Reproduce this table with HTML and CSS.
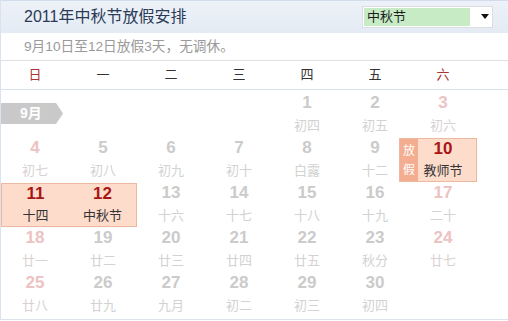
FILE: index.html
```html
<!DOCTYPE html>
<html lang="zh-CN">
<head>
<meta charset="utf-8">
<title>2011年中秋节放假安排</title>
<link rel="stylesheet" href="styles.css">
</head>
<body>
<div class="cal">
  <div class="hd">
    <h1 class="title">2011年中秋节放假安排</h1>
    <div class="sel">
      <span class="sel-val">中秋节</span>
      <span class="sel-arrow"></span>
    </div>
  </div>
  <div class="sub">9月10日至12日放假3天，无调休。</div>
  <div class="week">
    <span class="we">日</span><span>一</span><span>二</span><span>三</span><span>四</span><span>五</span><span class="we">六</span>
  </div>
  <div class="days">
    <div class="cell"><span class="month">9月</span></div>
    <div class="cell"></div>
    <div class="cell"></div>
    <div class="cell"></div>
    <div class="cell"><b>1</b><i>初四</i></div>
    <div class="cell"><b>2</b><i>初五</i></div>
    <div class="cell wk"><b>3</b><i>初六</i></div>

    <div class="cell wk"><b>4</b><i>初七</i></div>
    <div class="cell"><b>5</b><i>初八</i></div>
    <div class="cell"><b>6</b><i>初九</i></div>
    <div class="cell"><b>7</b><i>初十</i></div>
    <div class="cell"><b>8</b><i>白露</i></div>
    <div class="cell"><b>9</b><i>十二</i></div>
    <div class="cell hol hol-s hol-e"><span class="badge">放<br>假</span><b>10</b><i>教师节</i></div>

    <div class="cell hol hol-s"><b>11</b><i>十四</i></div>
    <div class="cell hol hol-e"><b>12</b><i>中秋节</i></div>
    <div class="cell"><b>13</b><i>十六</i></div>
    <div class="cell"><b>14</b><i>十七</i></div>
    <div class="cell"><b>15</b><i>十八</i></div>
    <div class="cell"><b>16</b><i>十九</i></div>
    <div class="cell wk"><b>17</b><i>二十</i></div>

    <div class="cell wk"><b>18</b><i>廿一</i></div>
    <div class="cell"><b>19</b><i>廿二</i></div>
    <div class="cell"><b>20</b><i>廿三</i></div>
    <div class="cell"><b>21</b><i>廿四</i></div>
    <div class="cell"><b>22</b><i>廿五</i></div>
    <div class="cell"><b>23</b><i>秋分</i></div>
    <div class="cell wk"><b>24</b><i>廿七</i></div>

    <div class="cell wk"><b>25</b><i>廿八</i></div>
    <div class="cell"><b>26</b><i>廿九</i></div>
    <div class="cell"><b>27</b><i>九月</i></div>
    <div class="cell"><b>28</b><i>初二</i></div>
    <div class="cell"><b>29</b><i>初三</i></div>
    <div class="cell"><b>30</b><i>初四</i></div>
    <div class="cell"></div>
  </div>
</div>
</body>
</html>
```

FILE: styles.css
```css
html, body {
  margin: 0;
  padding: 0;
  background: #fff;
}

body {
  font-family: "Liberation Sans", "Noto Sans CJK SC", sans-serif;
  width: 508px;
  height: 321px;
  overflow: hidden;
}

.cal {
  width: 508px;
  box-sizing: border-box;
  border-left: 1px solid #d9e2ee;
}

.hd {
  height: 33px;
  box-sizing: border-box;
  border-top: 1px solid #d3dcea;
  background: linear-gradient(#edf2f8, #e4ebf4);
  display: flex;
  align-items: center;
  padding-left: 23px;
}

.title {
  margin: 0;
  font-size: 16px;
  font-weight: normal;
  line-height: 20px;
  color: #2b3b57;
  flex: 1;
}

.sel {
  width: 131px;
  height: 22px;
  box-sizing: border-box;
  margin-right: 15px;
  margin-top: -1px;
  background: #fff;
  border: 1px solid #dadde2;
  display: flex;
  align-items: center;
  padding: 1px;
}

.sel-val {
  width: 106px;
  height: 18px;
  background: #c6ebc5;
  font-size: 13px;
  line-height: 18px;
  color: #1c1c1c;
  padding-left: 3px;
  box-sizing: border-box;
}

.sel-arrow {
  width: 0;
  height: 0;
  margin-left: 11px;
  border-left: 4px solid transparent;
  border-right: 4px solid transparent;
  border-top: 5px solid #111;
}

.sub {
  height: 27px;
  border-bottom: 1px solid #e0e0e0;
  padding-left: 23px;
  font-size: 13.7px;
  line-height: 27px;
  color: #9a9a9a;
}

.week {
  display: grid;
  grid-template-columns: repeat(7, 68px);
  height: 28px;
  border-bottom: 1px solid #d9e1ec;
  font-size: 13px;
  line-height: 28px;
  color: #333;
  text-align: center;
}

.week .we {
  color: #a83434;
}

.days {
  display: grid;
  grid-template-columns: repeat(7, 68px);
  grid-auto-rows: 45px;
  padding-top: 2px;
  padding-bottom: 2px;
  border-bottom: 1px solid #dde3ec;
}

.cell {
  position: relative;
  display: flex;
  flex-direction: column;
  align-items: center;
  box-sizing: border-box;
}

.cell b {
  font-family: "Liberation Sans", sans-serif;
  font-size: 17px;
  font-weight: bold;
  line-height: 22px;
  color: #cbcbcb;
}

.cell i {
  font-style: normal;
  font-size: 13px;
  line-height: 20px;
  margin-top: 2px;
  color: #d2d2d2;
}

.cell.wk b {
  color: #ecc2c2;
}

.cell.wk i {
  color: #d8d2d2;
}

.cell.hol {
  margin-top: 1px;
  height: 44px;
  background: #fddccb;
  border-top: 1px solid #edb8a0;
  border-bottom: 1px solid #edb8a0;
}

.cell.hol-s {
  border-left: 1px solid #edb8a0;
}

.cell.hol-e {
  border-right: 1px solid #edb8a0;
}

.cell.hol b {
  color: #a91515;
  line-height: 20px;
}

.cell.hol i {
  color: #333;
}

.badge {
  position: absolute;
  left: -11px;
  top: -1px;
  width: 19px;
  height: 44px;
  box-sizing: border-box;
  background: #f4ad90;
  border: 1px solid #edb8a0;
  border-right: none;
  color: #fff;
  font-size: 12px;
  line-height: 19px;
  text-align: center;
  padding-top: 3px;
}

.month {
  margin-top: 11px;
  align-self: flex-start;
  width: 62px;
  height: 21px;
  background: #c9c9c9;
  clip-path: polygon(0 0, 55px 0, 62px 50%, 55px 100%, 0 100%);
  color: #fff;
  font-weight: bold;
  font-size: 14px;
  line-height: 21px;
  padding-left: 19px;
  box-sizing: border-box;
}
```
